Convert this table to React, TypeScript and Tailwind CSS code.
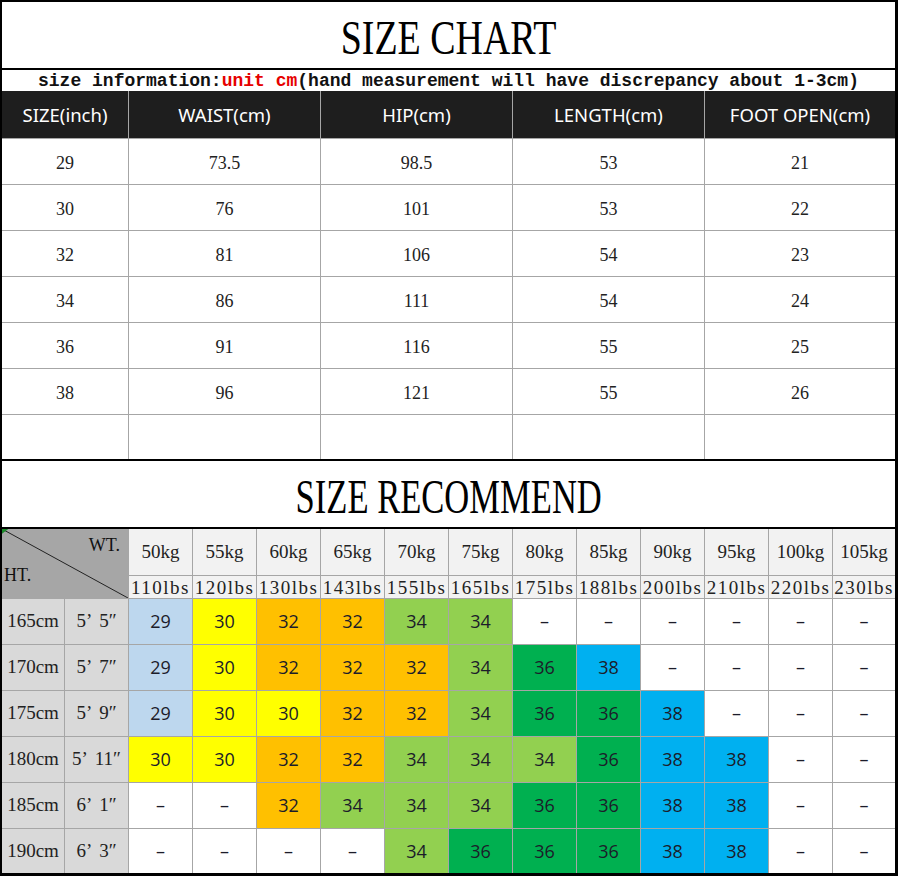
const serif = "font-['Liberation_Serif',serif]";
const sans = "font-['Open_Sans',sans-serif]";

const sizeRows = [
  ["29", "73.5", "98.5", "53", "21"],
  ["30", "76", "101", "53", "22"],
  ["32", "81", "106", "54", "23"],
  ["34", "86", "111", "54", "24"],
  ["36", "91", "116", "55", "25"],
  ["38", "96", "121", "55", "26"],
  ["", "", "", "", ""],
];

const headers = ["SIZE(inch)", "WAIST(cm)", "HIP(cm)", "LENGTH(cm)", "FOOT OPEN(cm)"];

const kgs = ["50kg", "55kg", "60kg", "65kg", "70kg", "75kg", "80kg", "85kg", "90kg", "95kg", "100kg", "105kg"];
const lbs = ["110lbs", "120lbs", "130lbs", "143lbs", "155lbs", "165lbs", "175lbs", "188lbs", "200lbs", "210lbs", "220lbs", "230lbs"];

const colors: Record<string, string> = {
  lb: "bg-[#bdd7ee]",
  y: "bg-[#ffff00]",
  o: "bg-[#ffc000]",
  lg: "bg-[#92d050]",
  g: "bg-[#00b050]",
  b: "bg-[#00b0f0]",
  "-": "bg-white",
};

// size:colour, "-" is an empty slot
const recommend: { cm: string; ft: string; inch: string; cells: string[] }[] = [
  { cm: "165cm", ft: "5", inch: "5″", cells: ["29:lb", "30:y", "32:o", "32:o", "34:lg", "34:lg", "-", "-", "-", "-", "-", "-"] },
  { cm: "170cm", ft: "5", inch: "7″", cells: ["29:lb", "30:y", "32:o", "32:o", "32:o", "34:lg", "36:g", "38:b", "-", "-", "-", "-"] },
  { cm: "175cm", ft: "5", inch: "9″", cells: ["29:lb", "30:y", "30:y", "32:o", "32:o", "34:lg", "36:g", "36:g", "38:b", "-", "-", "-"] },
  { cm: "180cm", ft: "5", inch: "11″", cells: ["30:y", "30:y", "32:o", "32:o", "34:lg", "34:lg", "34:lg", "36:g", "38:b", "38:b", "-", "-"] },
  { cm: "185cm", ft: "6", inch: "1″", cells: ["-", "-", "32:o", "34:lg", "34:lg", "34:lg", "36:g", "36:g", "38:b", "38:b", "-", "-"] },
  { cm: "190cm", ft: "6", inch: "3″", cells: ["-", "-", "-", "-", "34:lg", "36:g", "36:g", "36:g", "38:b", "38:b", "-", "-"] },
];

function Title({ text, squeeze }: { text: string; squeeze: string }) {
  return (
    <div className="h-[66px] flex items-center justify-center pt-[6px]">
      <span className={`inline-block ${squeeze} text-[48px] leading-none text-black ${serif}`}>{text}</span>
    </div>
  );
}

export default function App() {
  return (
    <div className="w-[898px] h-[876px] bg-white border-black border-t-2 border-l-2 border-r-[3px] border-b-[3px] flex flex-col overflow-hidden">
      <Title text="SIZE CHART" squeeze="scale-x-[0.79]" />

      {/* info line */}
      <div className="h-[23px] border-t-2 border-black flex justify-center items-end">
        <p className="text-[18px] leading-[20px] font-bold text-[#111] whitespace-nowrap font-['Liberation_Mono',monospace]">
          size information:<span className="text-[#e60000]">unit cm</span>(hand measurement will have discrepancy about 1-3cm)
        </p>
      </div>

      {/* size chart */}
      <div className="grid grid-cols-[126px_191px_191px_191px_1fr] grid-rows-[47px_repeat(6,45px)_44px] gap-px bg-[#a6a6a6]">
        {headers.map((h) => (
          <div key={h} className="bg-[#1e1e1e] text-white flex items-center justify-center text-[18.5px] font-['Noto_Sans',sans-serif]">
            {h}
          </div>
        ))}
        {sizeRows.map((row, r) =>
          row.map((v, c) => (
            <div key={`${r}-${c}`} className={`bg-white flex items-center justify-center pt-[3px] text-[18px] text-[#222] ${serif}`}>
              {v}
            </div>
          ))
        )}
      </div>

      <div className="border-t-2 border-black">
        <Title text="SIZE RECOMMEND" squeeze="scale-x-[0.72]" />
      </div>

      {/* recommend table */}
      <div className="border-t-2 border-black grid grid-cols-[62px_63px_repeat(11,63px)_1fr] grid-rows-[46px_22px_repeat(5,45px)_44px] gap-px bg-[#a6a6a6]">
        <div className={`col-span-2 row-span-2 relative bg-[#a6a6a6] text-[18px] text-[#111] ${serif}`}>
          <svg className="absolute inset-0 w-full h-full" viewBox="0 0 100 100" preserveAspectRatio="none">
            <line x1="0" y1="0" x2="100" y2="100" stroke="#222" strokeWidth="1" vectorEffect="non-scaling-stroke" />
            <polygon points="0,0 5,0 0,7" fill="#1a8a2a" />
          </svg>
          <span className="absolute right-[8px] top-[3px]">WT.</span>
          <span className="absolute left-[2px] top-[33px]">HT.</span>
        </div>
        {kgs.map((k) => (
          <div key={k} className={`bg-[#f2f2f2] flex items-center justify-center text-[19px] text-[#222] ${serif}`}>
            {k}
          </div>
        ))}
        {lbs.map((l) => (
          <div key={l} className={`bg-[#f2f2f2] flex items-center justify-center text-[19px] leading-none tracking-[1.5px] text-[#222] whitespace-nowrap ${serif}`}>
            {l}
          </div>
        ))}
        {recommend.map((row) => [
          <div key={`${row.cm}-cm`} className={`bg-[#d9d9d9] flex items-center justify-center text-[19px] text-[#222] ${serif}`}>
            {row.cm}
          </div>,
          <div key={`${row.cm}-ft`} className={`bg-[#d9d9d9] flex items-center justify-center text-[19px] text-[#222] ${serif}`}>
            {row.ft}
            <span className="mr-[7px]">’</span>
            {row.inch}
          </div>,
          ...row.cells.map((cell, i) => {
            const [val, col] = cell === "-" ? ["–", "-"] : cell.split(":");
            return (
              <div key={`${row.cm}-${i}`} className={`${colors[col]} flex items-center justify-center text-[18px] text-[#1c1c2a] ${sans}`}>
                {val}
              </div>
            );
          }),
        ])}
      </div>
    </div>
  );
}
